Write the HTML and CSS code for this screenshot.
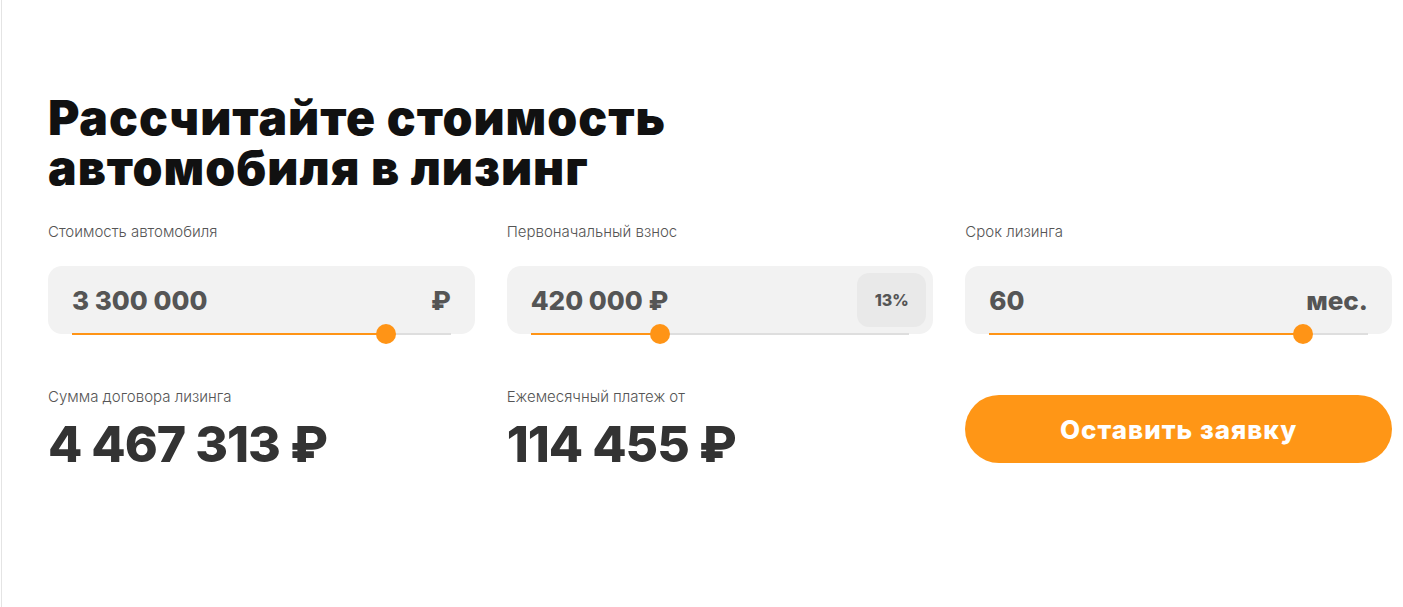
FILE: index.html
```html
<!DOCTYPE html>
<html lang="ru">
<head>
<meta charset="utf-8">
<title>Лизинг калькулятор</title>
<link rel="stylesheet" href="styles.css">
</head>
<body>
<div class="frame">
  <section class="calc">
    <h1 class="title">Рассчитайте стоимость<br>автомобиля в лизинг</h1>
    <div class="grid">
      <div class="field">
        <div class="label">Стоимость автомобиля</div>
        <div class="box">
          <span class="value">3 300 000</span>
          <span class="unit">₽</span>
          <div class="slider"><div class="fill" style="width:82.8%"></div><div class="thumb" style="left:82.8%"></div></div>
        </div>
      </div>
      <div class="field">
        <div class="label">Первоначальный взнос</div>
        <div class="box">
          <span class="value">420 000 ₽</span>
          <span class="badge">13%</span>
          <div class="slider"><div class="fill" style="width:34.1%"></div><div class="thumb" style="left:34.1%"></div></div>
        </div>
      </div>
      <div class="field">
        <div class="label">Срок лизинга</div>
        <div class="box">
          <span class="value">60</span>
          <span class="unit">мес.</span>
          <div class="slider"><div class="fill" style="width:82.8%"></div><div class="thumb" style="left:82.8%"></div></div>
        </div>
      </div>
      <div class="result">
        <div class="label">Сумма договора лизинга</div>
        <div class="big">4 467 313 ₽</div>
      </div>
      <div class="result">
        <div class="label">Ежемесячный платеж от</div>
        <div class="big">114 455 ₽</div>
      </div>
      <div class="action">
        <button class="btn">Оставить заявку</button>
      </div>
    </div>
  </section>
</div>
</body>
</html>
```

FILE: styles.css
```css
* { box-sizing: border-box; }
html, body { margin: 0; padding: 0; background: #fff; }
body { font-family: "Inter", "Noto Sans", sans-serif; }
.frame {
  margin-left: 1px;
  border-left: 1px solid #e4e4e4;
  min-height: 607px;
}
.calc {
  padding: 93px 11px 0 46px;
}
.title {
  margin: 0 0 29px;
  font-size: 48px;
  line-height: 50px;
  font-weight: 900;
  color: #111;
  letter-spacing: 1px;
}
.grid {
  display: grid;
  grid-template-columns: repeat(3, 1fr);
  column-gap: 32px;
  row-gap: 53px;
}
.label {
  font-size: 15px;
  font-weight: 300;
  color: #555;
  line-height: 20px;
}
.box {
  position: relative;
  margin-top: 24px;
  height: 68px;
  background: #f2f2f2;
  border-radius: 14px;
  display: flex;
  align-items: center;
  justify-content: space-between;
  padding: 0 24px;
}
.value {
  font-size: 26px;
  font-weight: 800;
  color: #555;
}
.unit {
  font-size: 26px;
  font-weight: 800;
  color: #555;
}
.badge {
  position: absolute;
  right: 7px;
  top: 7px;
  width: 69px;
  height: 54px;
  border-radius: 12px;
  background: #e9e9e9;
  display: flex;
  align-items: center;
  justify-content: center;
  font-size: 16px;
  font-weight: 800;
  color: #555;
}
.slider {
  position: absolute;
  left: 24px;
  right: 24px;
  bottom: -1px;
  height: 2px;
  background: #dedede;
}
.fill {
  height: 2px;
  background: #ff9416;
}
.thumb {
  position: absolute;
  top: -9px;
  width: 20px;
  height: 20px;
  margin-left: -10px;
  border-radius: 50%;
  background: #ff9416;
}
.big {
  margin-top: 9px;
  font-size: 50px;
  line-height: 56px;
  font-weight: 800;
  color: #333;
  letter-spacing: -1px;
}
.action {
  padding-top: 8px;
}
.btn {
  width: 100%;
  height: 68px;
  border: 0;
  border-radius: 34px;
  background: #ff9616;
  color: #fff;
  font-family: "Inter", "Noto Sans", sans-serif;
  font-size: 26px;
  font-weight: 800;
  letter-spacing: 1px;
  cursor: pointer;
}
```
